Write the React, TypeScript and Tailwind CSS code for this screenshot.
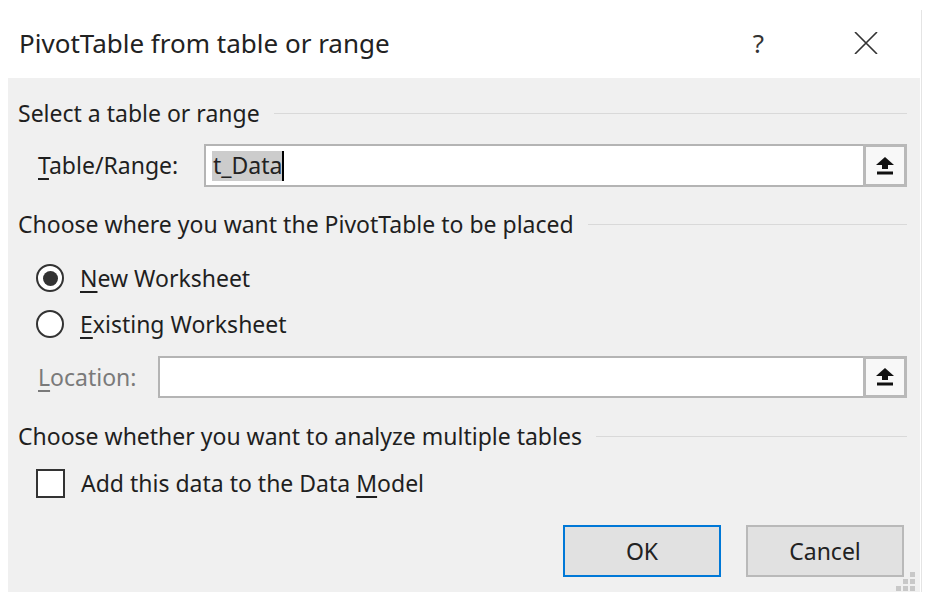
import React from "react";

const font = { fontFamily: '"Noto Sans", "Open Sans", sans-serif' };

function UploadIcon() {
  return (
    <svg width="18" height="18" viewBox="0 0 18 18">
      <polygon points="9,0 18,8 12,8 12,12 6,12 6,8 0,8" fill="#111" />
      <rect x="1" y="14.5" width="16" height="3" fill="#111" />
    </svg>
  );
}

function RefButton() {
  return (
    <div className="flex h-full w-[44px] items-center justify-center border-[3px] border-[#b9b9b9] bg-[#f8f8f8]">
      <UploadIcon />
    </div>
  );
}

function SectionHeading({ text }: { text: string }) {
  return (
    <div className="flex h-[30px] items-center">
      <span className="whitespace-nowrap text-[#1f1f1f]">{text}</span>
      <div className="ml-[14px] h-px flex-1 bg-[#d9d9d9]" />
    </div>
  );
}

export default function App() {
  return (
    <div
      className="relative flex h-[608px] w-[932px] flex-col bg-white text-[23px] text-[#1f1f1f]"
      style={font}
    >
      <div className="flex h-[78px] items-center pl-[19px] pr-[54px] pt-[8px]">
        <span className="text-[26px] text-[#222]">PivotTable from table or range</span>
        <span className="ml-auto mr-[90px] text-[26px] text-[#333]">?</span>
        <svg width="24" height="22" viewBox="0 0 24 22">
          <path d="M1 0 L23 22 M23 0 L1 22" stroke="#333" strokeWidth="1.6" />
        </svg>
      </div>
      <div className="flex flex-1">
        <div className="ml-[8px] flex h-[514px] w-[912px] flex-col bg-[#f0f0f0] pl-[10px] pr-[13px] pt-[20px]">
          <SectionHeading text="Select a table or range" />
          <div className="mt-[16px] flex h-[43px] items-center">
            <span className="pl-[20px]">
              <u className="underline-offset-4">T</u>able/Range:
            </span>
            <div className="ml-auto flex h-full w-[703px] items-center border-2 border-[#b4b4b4] bg-white pl-[6px]">
              <span className="flex h-[30px] items-center bg-[#cccccc] pl-[1px] text-[#222]">t_Data</span>
              <span className="h-[30px] w-[2px] bg-black" />
              <div className="ml-auto h-[43px] -mr-[2px]">
                <RefButton />
              </div>
            </div>
          </div>
          <div className="mt-[22px]">
            <SectionHeading text="Choose where you want the PivotTable to be placed" />
          </div>
          <div className="mt-[24px] flex h-[30px] items-center pl-[18px]">
            <span className="flex h-[28px] w-[28px] items-center justify-center rounded-full border-2 border-[#333] bg-white">
              <span className="h-[15px] w-[15px] rounded-full bg-[#333]" />
            </span>
            <span className="ml-[16px]">
              <u className="underline-offset-4">N</u>ew Worksheet
            </span>
          </div>
          <div className="mt-[16px] flex h-[30px] items-center pl-[18px]">
            <span className="h-[28px] w-[28px] rounded-full border-2 border-[#333] bg-white" />
            <span className="ml-[16px]">
              <u className="underline-offset-4">E</u>xisting Worksheet
            </span>
          </div>
          <div className="mt-[17px] flex h-[42px] items-center">
            <span className="pl-[20px] text-[#7a7a7a]">
              <u className="underline-offset-4">L</u>ocation:
            </span>
            <div className="ml-auto flex h-full w-[749px] items-center border-2 border-[#b4b4b4] bg-white">
              <div className="ml-auto h-[42px] -mr-[2px]">
                <RefButton />
              </div>
            </div>
          </div>
          <div className="mt-[23px]">
            <SectionHeading text="Choose whether you want to analyze multiple tables" />
          </div>
          <div className="mt-[17px] flex h-[30px] items-center pl-[18px]">
            <span className="h-[29px] w-[29px] border-2 border-[#333] bg-white" />
            <span className="ml-[16px]">
              Add this data to the Data <u className="underline-offset-4">M</u>odel
            </span>
          </div>
          <div className="mt-[27px] flex h-[52px] justify-end gap-[25px] pr-[3px]">
            <button className="h-full w-[158px] border-2 border-[#0078d7] bg-[#e1e1e1] text-[#222]">
              OK
            </button>
            <button className="h-full w-[158px] border-2 border-[#b9b9b9] bg-[#e1e1e1] text-[#222]">
              Cancel
            </button>
          </div>
        </div>
        <div className="ml-[1px] mt-[-68px] h-[582px] w-px bg-[#e4e4e4]" />
      </div>
      <div className="absolute left-[896px] top-[572px] grid grid-cols-3 gap-[2px]">
        <span className="h-[5px] w-[5px]" />
        <span className="h-[5px] w-[5px]" />
        <span className="h-[5px] w-[5px] bg-[#c8c8c8]" />
        <span className="h-[5px] w-[5px]" />
        <span className="h-[5px] w-[5px] bg-[#c8c8c8]" />
        <span className="h-[5px] w-[5px] bg-[#c8c8c8]" />
        <span className="h-[5px] w-[5px] bg-[#c8c8c8]" />
        <span className="h-[5px] w-[5px] bg-[#c8c8c8]" />
        <span className="h-[5px] w-[5px] bg-[#c8c8c8]" />
      </div>
    </div>
  );
}
